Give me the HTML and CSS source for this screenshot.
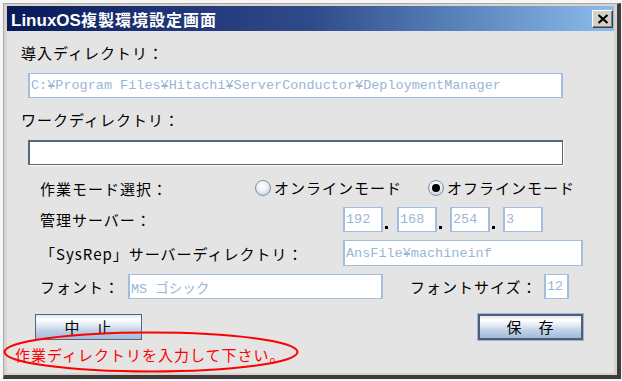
FILE: index.html
```html
<!DOCTYPE html>
<html lang="ja">
<head>
<meta charset="utf-8">
<title>LinuxOS複製環境設定画面</title>
<link rel="stylesheet" href="styles.css">
</head>
<body>
<div class="window">
  <div class="titlebar">
    <div class="title"><span class="t-latin">LinuxOS</span><span class="t-kanji">複製環境設定画面</span></div>
    <div class="close"><svg width="12" height="10" viewBox="0 0 12 10"><path d="M1.5 1 L10.5 9 M10.5 1 L1.5 9" stroke="#000" stroke-width="2.2" fill="none"/></svg></div>
  </div>
  <div class="content">
    <div class="label l1">導入ディレクトリ：</div>
    <div class="field disabled wide">C:¥Program Files¥Hitachi¥ServerConductor¥DeploymentManager</div>
    <div class="label l2">ワークディレクトリ：</div>
    <div class="field editable wide"></div>

    <div class="row mode">
      <div class="rlabel w-mode">作業モード選択：</div>
      <div class="option opt1"><span class="radio"></span><span class="otext">オンラインモード</span></div>
      <div class="option"><span class="radio checked"></span><span class="otext">オフラインモード</span></div>
    </div>

    <div class="row server">
      <div class="rlabel w-long">管理サーバー：</div>
      <div class="field disabled ip">192</div><span class="dot d14"></span>
      <div class="field disabled ip">168</div><span class="dot d13"></span>
      <div class="field disabled ip">254</div><span class="dot d13"></span>
      <div class="field disabled ip">3</div>
    </div>

    <div class="row sysrep">
      <div class="rlabel w-long">「SysRep」サーバーディレクトリ：</div>
      <div class="field disabled sysdir">AnsFile¥machineinf</div>
    </div>

    <div class="row font">
      <div class="rlabel w-font">フォント：</div>
      <div class="field disabled fontname">MS ゴシック</div>
      <div class="rlabel w-size">フォントサイズ：</div>
      <div class="field disabled fontsize">12</div>
    </div>

    <div class="buttons">
      <button class="btn">中　止</button>
      <button class="btn default">保　存</button>
    </div>

    <div class="error">作業ディレクトリを入力して下さい。</div>
  </div>
  <svg class="mark" width="297" height="43" viewBox="0 0 297 43"><ellipse cx="148" cy="21" rx="146.5" ry="19.5" fill="none" stroke="#ff0000" stroke-width="2"/></svg>
</div>
</body>
</html>
```
FILE: styles.css
```css
html, body {
  margin: 0;
  padding: 0;
  background: #f6f6f6;
}
body {
  width: 622px;
  height: 381px;
  overflow: hidden;
  font-family: "Noto Sans CJK JP", sans-serif;
}
.window {
  box-sizing: border-box;
  position: relative;
  width: 618px;
  height: 376px;
  margin: 3px 0 0 3px;
  border-style: solid;
  border-width: 1px 4px 4px 1px;
  border-color: #a8a8a8 #3c3c3c #3c3c3c #a8a8a8;
  padding: 2px 3px;
  background: #d8d4cc;
  display: flex;
  flex-direction: column;
}
.titlebar {
  height: 25px;
  flex: none;
  display: flex;
  align-items: center;
  justify-content: space-between;
  background: linear-gradient(to right, #081858 0%, #1e3476 25%, #2f4a8a 50%, #5a84bc 75%, #8cbcec 100%);
}
.title {
  color: #fff;
  font-weight: bold;
  padding-left: 4px;
  display: flex;
  align-items: baseline;
}
.t-latin {
  font-family: "Liberation Sans", sans-serif;
  font-size: 17px;
}
.t-kanji {
  font-family: "Noto Sans CJK JP", sans-serif;
  font-size: 16px;
  letter-spacing: 1px;
}
.close {
  box-sizing: border-box;
  width: 21px;
  height: 18px;
  margin-right: 1px;
  background: #d4d0c8;
  border-style: solid;
  border-width: 1px;
  border-color: #ffffff #404040 #404040 #ffffff;
  box-shadow: inset -1px -1px 0 #808080;
  display: flex;
  align-items: center;
  justify-content: center;
}
.content {
  flex: 1;
  background: #e4e4e4;
  display: flex;
  flex-direction: column;
  align-items: flex-start;
  font-size: 15px;
  letter-spacing: 1px;
  color: #000;
}
.label {
  height: 18px;
  line-height: 18px;
  margin-left: 14px;
  white-space: nowrap;
}
.l1 { margin-top: 13px; }
.l2 { margin-top: 13px; }
.field {
  box-sizing: border-box;
  height: 25px;
  background: #fff;
  display: flex;
  align-items: center;
  white-space: nowrap;
  overflow: hidden;
}
.disabled {
  border-style: solid;
  border-color: #a2bedc;
  border-width: 1px 2px;
  padding-left: 1px;
  color: #9ab6d6;
  font-family: "Liberation Mono", "Noto Sans CJK JP", monospace;
  font-size: 13.5px;
  letter-spacing: 0;
}
.editable {
  border: 1px solid #55677a;
  border-top-width: 2px;
  border-left-width: 2px;
  box-shadow: 1px 1px 0 #ffffff;
}
.wide {
  width: 535px;
  margin-left: 21px;
  margin-top: 11px;
}
.row {
  display: flex;
  align-items: center;
  margin-left: 33px;
  white-space: nowrap;
}
.rlabel { flex: none; }
.mode { height: 22px; margin-top: 12px; }
.server { height: 25px; margin-top: 8px; }
.sysrep { height: 26px; margin-top: 8px; }
.font { height: 25px; margin-top: 8px; }
.w-mode { width: 215px; }
.w-long { width: 303px; }
.w-font { width: 88px; }
.w-size { width: 134px; margin-left: 27px; }
.option {
  display: flex;
  align-items: center;
}
.opt1 { width: 173px; }
.radio {
  box-sizing: border-box;
  width: 16px;
  height: 16px;
  margin-right: 3px;
  border-radius: 50%;
  border: 1px solid #7d91a8;
  background: radial-gradient(circle at 45% 35%, #ffffff 0%, #eef2f6 40%, #b4c2d2 100%);
  position: relative;
  flex: none;
}
.radio.checked::after {
  content: "";
  position: absolute;
  left: 3px;
  top: 3px;
  width: 8px;
  height: 8px;
  border-radius: 50%;
  background: #000;
}
.otext { line-height: 18px; }
.ip { width: 40px; }
.sysrep .field { height: 26px; }
.sysdir { width: 240px; }
.fontname { width: 255px; }
.fontsize { width: 25px; }
.dot {
  height: 25px;
  display: flex;
  align-items: flex-end;
  flex: none;
}
.dot::before {
  content: "";
  width: 3px;
  height: 3px;
  background: #000;
  margin: 0 0 3px 2px;
}
.d14 { width: 14px; }
.d13 { width: 13px; }
.buttons {
  display: flex;
  justify-content: space-between;
  width: 548px;
  margin-left: 28px;
  margin-top: 15px;
}
.btn {
  box-sizing: border-box;
  height: 26px;
  width: 107px;
  padding: 0;
  margin: 0;
  border: 1px solid #56667c;
  background: linear-gradient(to bottom, #dfe7f1 0%, #ffffff 18%, #e6edf6 40%, #bfd1e6 65%, #a3bbd8 100%);
  font-family: "Noto Sans CJK JP", sans-serif;
  font-size: 15px;
  letter-spacing: 1px;
  color: #000;
  line-height: 22px;
}
.btn.default {
  width: 105px;
  border: 2px solid #4e5e74;
  box-shadow: 0 0 0 1px #9ab6d6;
}
.error {
  margin-top: 6px;
  margin-left: 8px;
  height: 18px;
  line-height: 18px;
  color: #ff0000;
  white-space: nowrap;
}
.mark {
  position: absolute;
  left: -1px;
  top: 327px;
  pointer-events: none;
}
```
